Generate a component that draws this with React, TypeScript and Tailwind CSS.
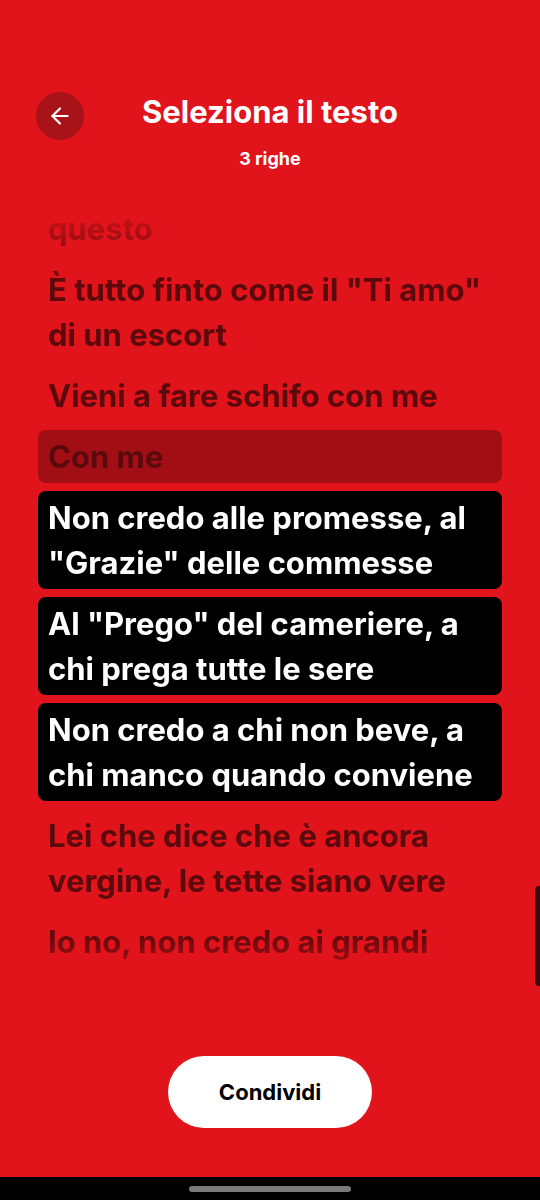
import { ArrowLeft } from 'lucide-react';

type Line = { lines: string[]; state: 'idle' | 'prev' | 'selected' };

const lyrics: Line[] = [
  { lines: ['questo'], state: 'idle' },
  { lines: ['È tutto finto come il "Ti amo"', 'di un escort'], state: 'idle' },
  { lines: ['Vieni a fare schifo con me'], state: 'idle' },
  { lines: ['Con me'], state: 'prev' },
  { lines: ['Non credo alle promesse, al', '"Grazie" delle commesse'], state: 'selected' },
  { lines: ['Al "Prego" del cameriere, a', 'chi prega tutte le sere'], state: 'selected' },
  { lines: ['Non credo a chi non beve, a', 'chi manco quando conviene'], state: 'selected' },
  { lines: ['Lei che dice che è ancora', 'vergine, le tette siano vere'], state: 'idle' },
  { lines: ['Io no, non credo ai grandi'], state: 'idle' },
];

function LyricRow({ item }: { item: Line }) {
  const box =
    item.state === 'selected'
      ? 'bg-black text-white'
      : item.state === 'prev'
        ? 'bg-[#a10f15] text-[#5a090c]'
        : 'text-[#5a090c]';
  return (
    <div className={`rounded-lg px-[10px] py-1 ${box}`}>
      {item.lines.map((l, i) => (
        <div key={i} className="whitespace-nowrap text-[31px] leading-[45px] font-bold">
          {l}
        </div>
      ))}
    </div>
  );
}

export default function App() {
  return (
    <div
      className="relative flex h-[1200px] w-full flex-col overflow-hidden bg-[#e1131b]"
      style={{ fontFamily: 'Inter, "Noto Sans", sans-serif' }}
    >
      {/* header */}
      <div className="px-[36px] pt-[92px]">
        <div className="grid grid-cols-[48px_1fr_48px] items-start">
          <button className="flex h-12 w-12 items-center justify-center rounded-full bg-[#a8131a]">
            <ArrowLeft className="h-[26px] w-[26px] text-white" strokeWidth={2} />
          </button>
          <h1 className="-mt-[1px] text-center text-[31px] leading-[42px] font-bold text-white">
            Seleziona il testo
          </h1>
          <div />
        </div>
        <p className="mt-[7px] text-center text-[18px] leading-6 font-bold text-white">3 righe</p>
      </div>

      {/* lyrics list */}
      <div className="mt-[31px] h-[800px] overflow-hidden px-[38px] [mask-image:linear-gradient(to_bottom,transparent_0px,black_80px,black_calc(100%-70px),transparent_calc(100%-10px))]">
        <div className="flex flex-col gap-2">
          {lyrics.map((item, i) => (
            <LyricRow key={i} item={item} />
          ))}
        </div>
      </div>

      {/* share button */}
      <div className="mt-[54px] flex justify-center">
        <button className="h-[72px] w-[204px] rounded-full bg-white text-[22px] font-bold text-black">
          Condividi
        </button>
      </div>

      <div className="flex-1" />

      {/* system nav bar */}
      <div className="flex h-[23px] items-start justify-center bg-black pt-[9px]">
        <div className="h-[6px] w-[162px] rounded-full bg-[#7a7a7a]" />
      </div>

      {/* scrollbar */}
      <div className="absolute right-0 top-[886px] h-[100px] w-[5px] rounded-l-sm bg-[#3a0a0e]" />
    </div>
  );
}
